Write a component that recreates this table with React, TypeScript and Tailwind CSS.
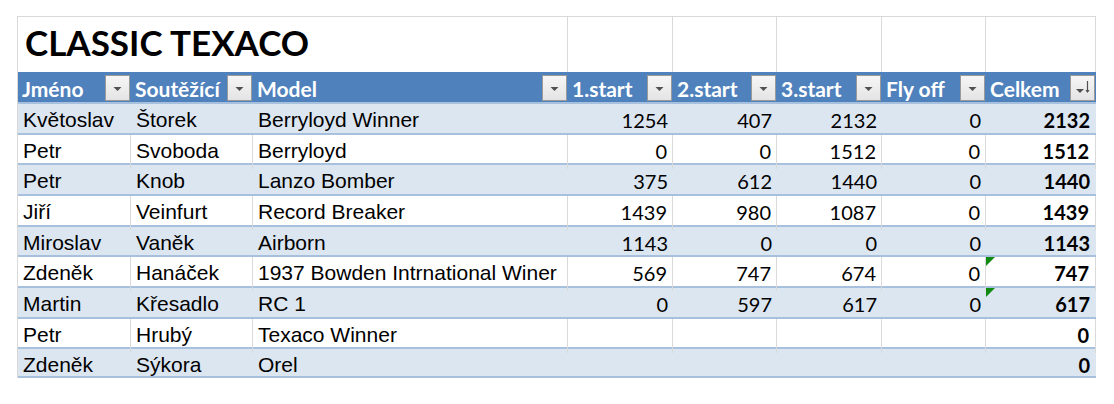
const cols = 'grid grid-cols-[113px_122px_315px_105px_104px_105px_104px_110px]'

type Row = {
  first: string
  last: string
  model: string
  s1: string
  s2: string
  s3: string
  fly: string
  total: string
  flag?: boolean
  h: string
}

const rows: Row[] = [
  { first: 'Květoslav', last: 'Štorek', model: 'Berryloyd Winner', s1: '1254', s2: '407', s3: '2132', fly: '0', total: '2132', h: 'h-[31px]' },
  { first: 'Petr', last: 'Svoboda', model: 'Berryloyd', s1: '0', s2: '0', s3: '1512', fly: '0', total: '1512', h: 'h-[30px]' },
  { first: 'Petr', last: 'Knob', model: 'Lanzo Bomber', s1: '375', s2: '612', s3: '1440', fly: '0', total: '1440', h: 'h-[31px]' },
  { first: 'Jiří', last: 'Veinfurt', model: 'Record Breaker', s1: '1439', s2: '980', s3: '1087', fly: '0', total: '1439', h: 'h-[31px]' },
  { first: 'Miroslav', last: 'Vaněk', model: 'Airborn', s1: '1143', s2: '0', s3: '0', fly: '0', total: '1143', h: 'h-[30px]' },
  { first: 'Zdeněk', last: 'Hanáček', model: '1937 Bowden Intrnational Winer', s1: '569', s2: '747', s3: '674', fly: '0', total: '747', flag: true, h: 'h-[31px]' },
  { first: 'Martin', last: 'Křesadlo', model: 'RC 1', s1: '0', s2: '597', s3: '617', fly: '0', total: '617', flag: true, h: 'h-[31px]' },
  { first: 'Petr', last: 'Hrubý', model: 'Texaco Winner', s1: '', s2: '', s3: '', fly: '', total: '0', h: 'h-[30px]' },
  { first: 'Zdeněk', last: 'Sýkora', model: 'Orel', s1: '', s2: '', s3: '', fly: '', total: '0', h: 'h-[31px]' },
]

function FilterButton({ sorted }: { sorted?: boolean }) {
  return (
    <div className="ml-auto mr-px flex h-[26px] w-[25px] shrink-0 items-center justify-center border border-[#9a9a9a] bg-gradient-to-b from-[#f6f6f6] to-[#e4e4e4]">
      <svg width="19" height="18" viewBox="0 0 19 18">
        {sorted ? (
          <>
            <path d="M3 10h8l-4 4z" fill="#505050" />
            <path d="M14.5 2v11" stroke="#505050" strokeWidth="1.2" />
            <path d="M12.5 11l2 3 2-3z" fill="#505050" />
          </>
        ) : (
          <path d="M5.5 8h8l-4 4z" fill="#505050" />
        )}
      </svg>
    </div>
  )
}

function HeaderCell({ label, sorted }: { label: string; sorted?: boolean }) {
  return (
    <div className="flex items-center pl-[4px]">
      <span className="whitespace-nowrap pt-px font-['Lato',sans-serif] text-[21px] font-bold text-white">{label}</span>
      <FilterButton sorted={sorted} />
    </div>
  )
}

export default function App() {
  return (
    <div className="h-[404px] w-[1114px] bg-white pl-[17px] pt-[16px]">
      <div className="w-[1079px] border-l border-t border-[#d9d9d9]">
        {/* title row */}
        <div className={`${cols} h-[55px]`}>
          <div className="col-span-3 flex items-end border-r border-[#d9d9d9] pb-[12px] pl-[7px]">
            <span className="font-['Lato',sans-serif] text-[35px] font-bold leading-none text-black">CLASSIC TEXACO</span>
          </div>
          {[0, 1, 2, 3, 4].map((i) => (
            <div key={i} className="border-r border-[#d9d9d9]" />
          ))}
        </div>
        {/* header */}
        <div className={`${cols} h-[30px] bg-[#4f81bd]`}>
          <HeaderCell label="Jméno" />
          <HeaderCell label="Soutěžící" />
          <HeaderCell label="Model" />
          <HeaderCell label="1.start" />
          <HeaderCell label="2.start" />
          <HeaderCell label="3.start" />
          <HeaderCell label="Fly off" />
          <HeaderCell label="Celkem" sorted />
        </div>
        {rows.map((r, i) => {
          const band = i % 2 === 0
          const cell = band ? '' : 'border-r border-[#d9d9d9]'
          const txt = "font-['Liberation_Sans',Arial,sans-serif] text-[21px] text-black"
          const num = "font-['Lato',sans-serif] text-[20px] text-black"
          return (
            <div
              key={i}
              className={`${cols} ${r.h} border-t-2 border-[#a7c0de] ${band ? 'bg-[#dce6f1]' : 'bg-white'} ${i === rows.length - 1 ? 'border-b-2' : ''}`}
            >
              <div className={`flex items-center pb-[2px] pl-[5px] ${cell} ${txt}`}>{r.first}</div>
              <div className={`flex items-center pb-[2px] pl-[5px] ${cell} ${txt}`}>{r.last}</div>
              <div className={`flex items-center whitespace-nowrap pb-[2px] pl-[5px] ${cell} ${txt}`}>{r.model}</div>
              <div className={`flex items-center justify-end pb-[2px] pr-[5px] ${cell} ${num}`}>{r.s1}</div>
              <div className={`flex items-center justify-end pb-[2px] pr-[5px] ${cell} ${num}`}>{r.s2}</div>
              <div className={`flex items-center justify-end pb-[2px] pr-[5px] ${cell} ${num}`}>{r.s3}</div>
              <div className={`flex items-center justify-end pb-[2px] pr-[5px] ${cell} ${num}`}>{r.fly}</div>
              <div className={`relative flex items-center justify-end pb-[2px] pr-[6px] font-bold ${cell} ${num}`}>
                {r.flag && (
                  <svg className="absolute left-0 top-0" width="9" height="9" viewBox="0 0 9 9">
                    <path d="M0 0h9L0 9z" fill="#108a10" />
                  </svg>
                )}
                {r.total}
              </div>
            </div>
          )
        })}
      </div>
    </div>
  )
}
